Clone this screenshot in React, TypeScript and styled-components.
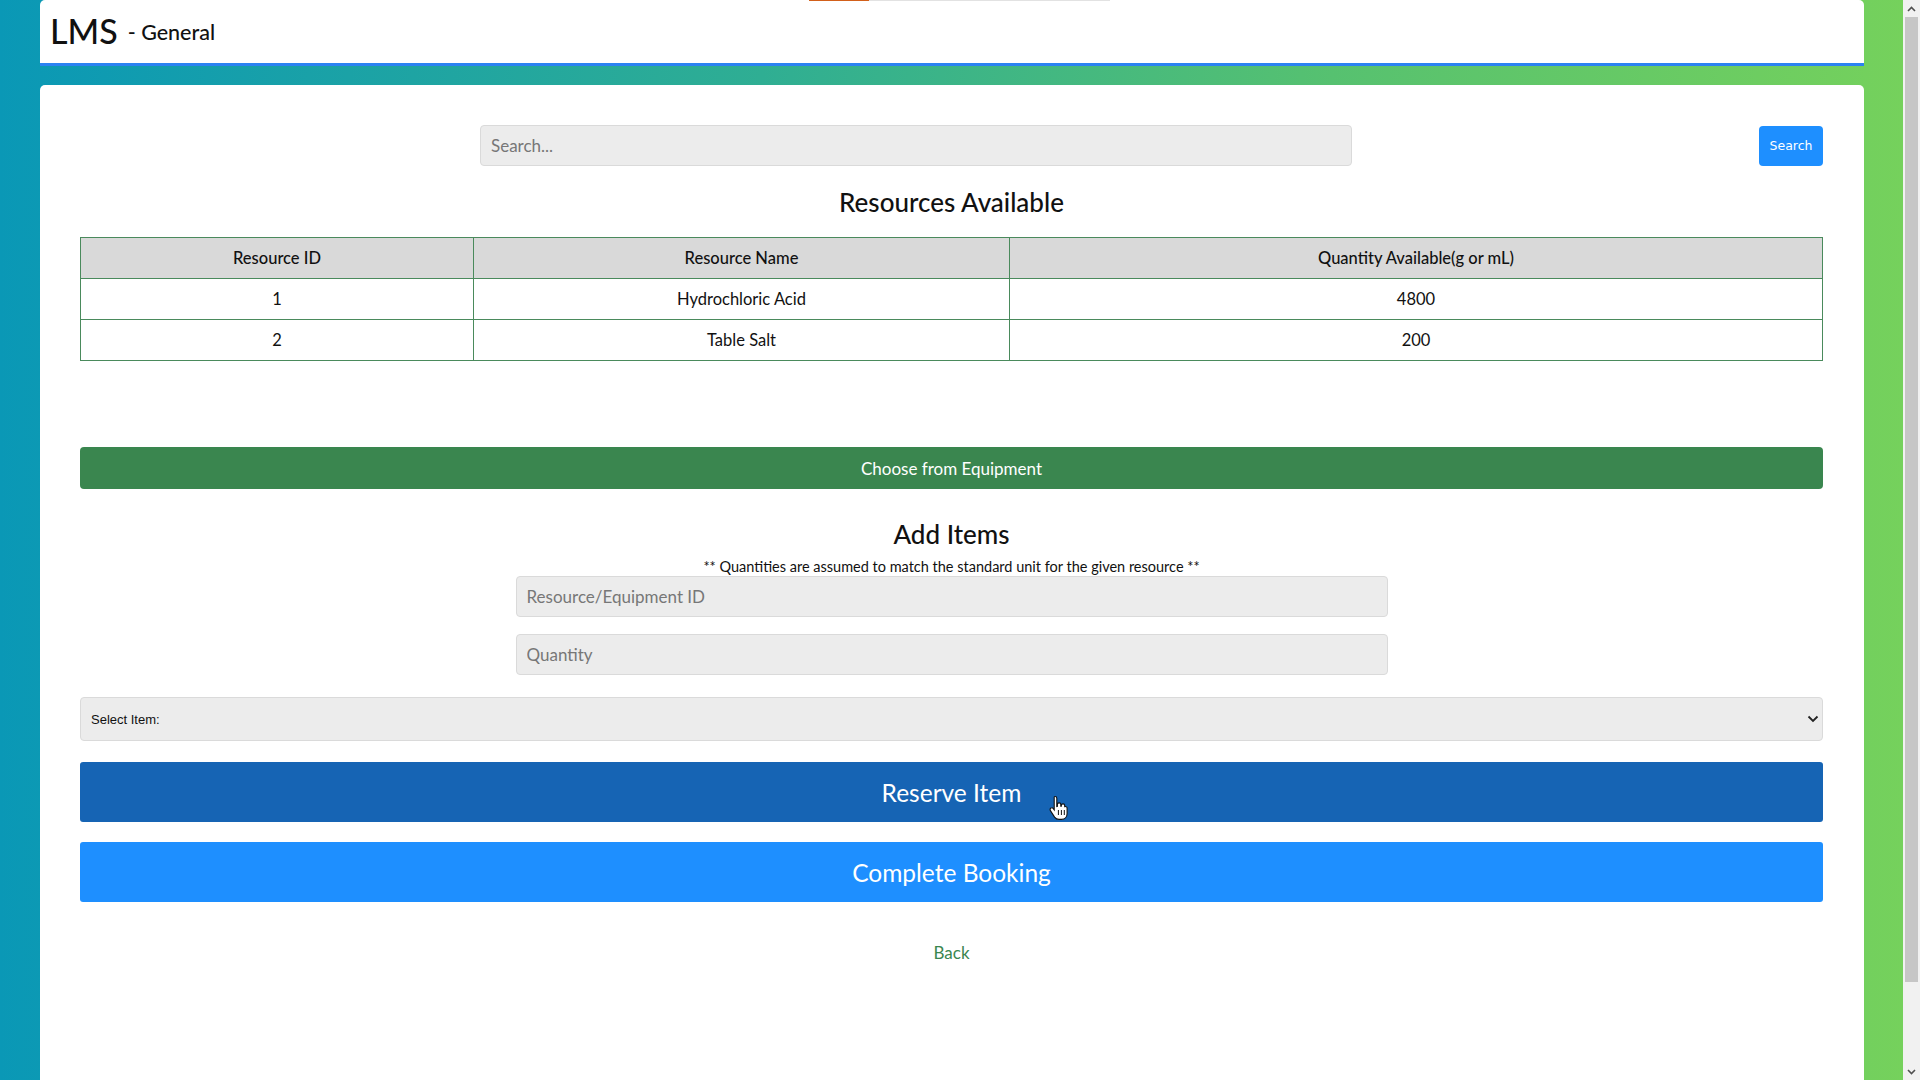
import React from 'react';
import styled, { createGlobalStyle } from 'styled-components';

const resources = [
  { id: 1, name: 'Hydrochloric Acid', qty: 4800 },
  { id: 2, name: 'Table Salt', qty: 200 },
];

const App: React.FC = () => {
  return (
    <>
      <GlobalStyle />
      <Page>
        <Viewport>
          <Header>
            <LoadBar>
              <LoadDone />
            </LoadBar>
            <Brand>LMS</Brand>
            <SubBrand>- General</SubBrand>
          </Header>

          <Card>
            <SearchRow>
              <TextInput placeholder="Search..." $width="872px" />
              <SmallButton>Search</SmallButton>
            </SearchRow>

            <Title>Resources Available</Title>

            <Table>
              <colgroup>
                <col style={{ width: '393px' }} />
                <col style={{ width: '536px' }} />
                <col />
              </colgroup>
              <thead>
                <tr>
                  <Th>Resource ID</Th>
                  <Th>Resource Name</Th>
                  <Th>Quantity Available(g or mL)</Th>
                </tr>
              </thead>
              <tbody>
                {resources.map(r => (
                  <tr key={r.id}>
                    <Td>{r.id}</Td>
                    <Td>{r.name}</Td>
                    <Td>{r.qty}</Td>
                  </tr>
                ))}
              </tbody>
            </Table>

            <GreenButton>Choose from Equipment</GreenButton>

            <Title $top="31px" $bottom="0">Add Items</Title>
            <Note>** Quantities are assumed to match the standard unit for the given resource **</Note>

            <FormColumn>
              <TextInput placeholder="Resource/Equipment ID" $width="872px" />
              <TextInput placeholder="Quantity" $width="872px" />
            </FormColumn>

            <SelectWrap>
              <Select defaultValue="">
                <option value="">Select Item:</option>
              </Select>
              <Chevron width="12" height="8" viewBox="0 0 12 8">
                <path d="M1.5 1.5 L6 6 L10.5 1.5" fill="none" stroke="#222" strokeWidth="1.8" />
              </Chevron>
            </SelectWrap>

            <BigButton $bg="#1664b4" $top="21px">
              Reserve Item
              <Pointer width="20" height="26" viewBox="0 0 20 26">
                <path
                  d="M6 1.5c1 0 1.8.8 1.8 1.8v8.2l.6-.1V9.6c0-1 .8-1.7 1.7-1.7s1.7.7 1.7 1.7v1.6h.5v-.6c0-1 .8-1.7 1.7-1.7s1.7.7 1.7 1.7v1h.4c.9-.3 2 .4 2 1.5v5.3c0 3.4-2.3 6-5.6 6H10c-2 0-3.3-.8-4.4-2.3L1.4 15.6c-.6-.9-.3-2 .6-2.5.8-.5 1.8-.2 2.3.5l.9 1.2V3.3C5.2 2.3 5 1.5 6 1.5z"
                  fill="#fff"
                  stroke="#111"
                  strokeWidth="1.1"
                />
                <path d="M9.4 15v5M12.4 15v5M15.3 15v5" stroke="#111" strokeWidth="1" />
              </Pointer>
            </BigButton>
            <BigButton $bg="#1e8fff" $top="20px">Complete Booking</BigButton>

            <BackLink href="#">Back</BackLink>
          </Card>
        </Viewport>

        <Scrollbar>
          <ScrollArrow>
            <svg width="9" height="6" viewBox="0 0 9 6">
              <path d="M1 5 L4.5 1.5 L8 5" fill="none" stroke="#505050" strokeWidth="1.6" />
            </svg>
          </ScrollArrow>
          <ScrollTrack>
            <ScrollThumb />
          </ScrollTrack>
          <ScrollArrow>
            <svg width="9" height="6" viewBox="0 0 9 6">
              <path d="M1 1 L4.5 4.5 L8 1" fill="none" stroke="#505050" strokeWidth="1.6" />
            </svg>
          </ScrollArrow>
        </Scrollbar>
      </Page>
    </>
  );
};

// --- Styled Components ---

const GlobalStyle = createGlobalStyle`
  html, body {
    margin: 0;
    padding: 0;
    overflow: hidden;
  }
  body {
    font-family: Lato, "Open Sans", sans-serif;
    color: #111;
  }
  * {
    box-sizing: border-box;
  }
`;

const Page = styled.div`
  display: flex;
  height: 100vh;
  width: 100vw;
`;

const Viewport = styled.div`
  flex: 1;
  display: flex;
  flex-direction: column;
  padding: 0 39px 0 40px;
  overflow: hidden;
  background: linear-gradient(90deg, #0a98b6 0%, #2fae93 40%, #56c170 70%, #75d15c 100%);
`;

const Header = styled.header`
  position: relative;
  flex: none;
  height: 66px;
  display: flex;
  align-items: center;
  gap: 10px;
  padding: 0 10px 2px;
  background: #fff;
  border-bottom: 3px solid #2b82f2;
  border-radius: 5px 5px 0 0;
`;

const LoadBar = styled.div`
  position: absolute;
  top: 0;
  left: 769px;
  width: 301px;
  height: 1px;
  background: #e2e2e2;
`;

const LoadDone = styled.div`
  width: 60px;
  height: 100%;
  background: #d2601a;
`;

const Brand = styled.span`
  font-size: 34px;
  font-weight: 500;
`;

const SubBrand = styled.span`
  font-size: 21.5px;
  font-weight: 500;
  margin-top: 2px;
`;

const Card = styled.main`
  flex: 1;
  margin-top: 19px;
  padding: 40px 41px 0 40px;
  background: #fff;
  border-radius: 5px 5px 0 0;
  display: flex;
  flex-direction: column;
  align-items: center;
`;

const SearchRow = styled.div`
  width: 100%;
  display: flex;
  align-items: center;
  padding-left: 400px;
`;

const TextInput = styled.input<{ $width: string }>`
  width: ${props => props.$width};
  height: 41px;
  padding: 0 10px;
  background: #ececec;
  border: 1px solid #dadada;
  border-radius: 4px;
  font-family: Lato, "Open Sans", sans-serif;
  font-size: 17px;
  color: #333;
  outline: none;

  &::placeholder {
    color: #777;
  }
`;

const SmallButton = styled.button`
  margin-left: auto;
  width: 64px;
  height: 40px;
  border: none;
  border-radius: 4px;
  background: #1e8fff;
  color: #fff;
  font-family: "DejaVu Sans", sans-serif;
  font-size: 12.5px;
`;

const Title = styled.h2<{ $top?: string; $bottom?: string }>`
  margin: ${props => props.$top ?? '22px'} 0 ${props => props.$bottom ?? '21px'};
  font-size: 26px;
  line-height: 28px;
  font-weight: 500;
`;

const Table = styled.table`
  width: 100%;
  border-collapse: collapse;
  table-layout: fixed;
  font-size: 16.5px;
`;

const Th = styled.th`
  height: 41px;
  background: #d9d9d9;
  border: 1px solid #4a8a5c;
  font-weight: 500;
  text-align: center;
`;

const Td = styled.td`
  height: 41px;
  border: 1px solid #4a8a5c;
  text-align: center;
`;

const GreenButton = styled.button`
  width: 100%;
  height: 42px;
  margin-top: 86px;
  border: none;
  border-radius: 4px;
  background: #3a864f;
  color: #fff;
  font-family: Lato, "Open Sans", sans-serif;
  font-size: 17px;
`;

const Note = styled.p`
  margin: 11px 0 1px;
  font-size: 14.5px;
  line-height: 16px;
`;

const FormColumn = styled.div`
  display: flex;
  flex-direction: column;
  gap: 17px;
`;

const SelectWrap = styled.div`
  position: relative;
  width: 100%;
  margin-top: 22px;
`;

const Select = styled.select`
  width: 100%;
  height: 44px;
  padding: 0 10px;
  appearance: none;
  background: #ececec;
  border: 1px solid #dadada;
  border-radius: 4px;
  font-family: "Liberation Sans", sans-serif;
  font-size: 13px;
  color: #111;
`;

const Chevron = styled.svg`
  position: absolute;
  right: 4px;
  top: 18px;
  pointer-events: none;
`;

const BigButton = styled.button<{ $bg: string; $top: string }>`
  position: relative;
  width: 100%;
  height: 60px;
  margin-top: ${props => props.$top};
  border: none;
  border-radius: 3px;
  background: ${props => props.$bg};
  color: #fff;
  font-family: Lato, "Open Sans", sans-serif;
  font-size: 24.5px;
`;

const Pointer = styled.svg`
  position: absolute;
  left: 969px;
  top: 33px;
`;

const BackLink = styled.a`
  margin-top: 40px;
  color: #3a864f;
  font-size: 17px;
  text-decoration: none;
`;

const Scrollbar = styled.div`
  flex: none;
  width: 17px;
  display: flex;
  flex-direction: column;
  background: #f1f1f1;
`;

const ScrollArrow = styled.div`
  height: 17px;
  display: flex;
  align-items: center;
  justify-content: center;
`;

const ScrollTrack = styled.div`
  flex: 1;
  padding: 0 2px;
`;

const ScrollThumb = styled.div`
  height: 965px;
  background: #c6c6c6;
`;

export default App;
